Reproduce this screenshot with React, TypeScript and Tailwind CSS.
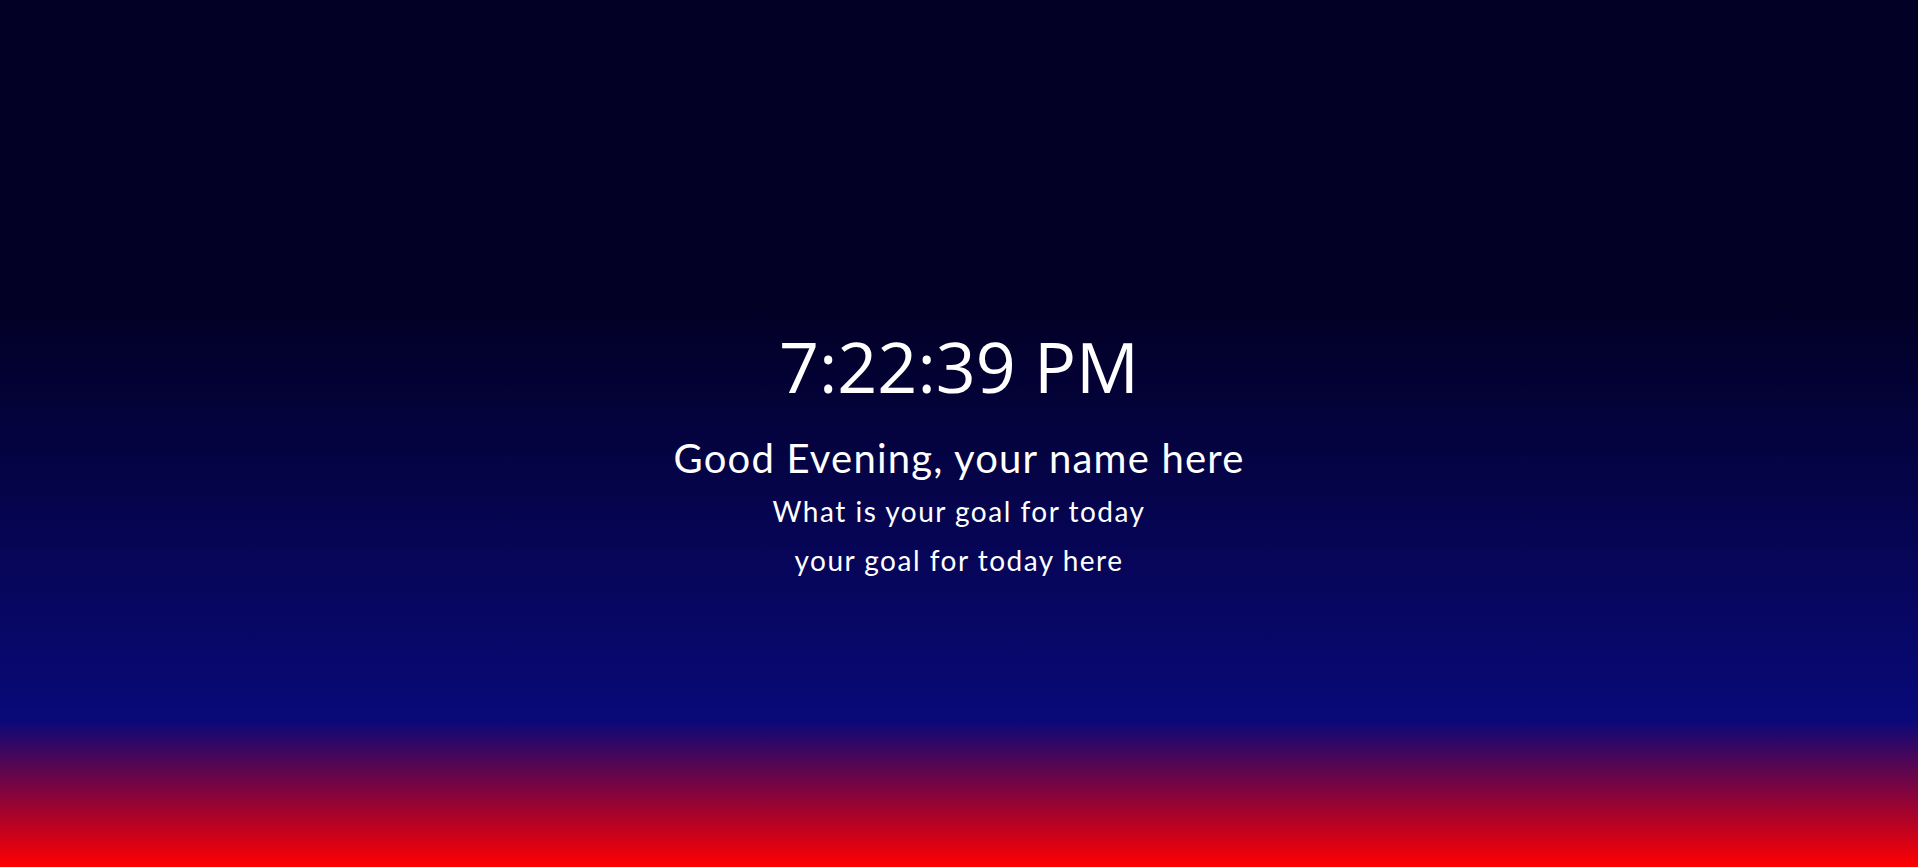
export default function App() {
  return (
    <div className="flex h-[867px] w-full flex-col items-center bg-[linear-gradient(180deg,#020024_35%,#090979_83%,#ff0000_100%)] pt-[318px] text-white">
      <h1 className="font-['Open_Sans',sans-serif] text-[70px] leading-[96px]">
        7:22:39 PM
      </h1>
      <div className="mt-[16px] flex flex-col items-center font-['Lato',sans-serif]">
        <p className="text-[40px] leading-[56px] tracking-[1.2px]">
          Good Evening, your name here
        </p>
        <p className="text-[28px] leading-[51px] tracking-[1.5px]">
          What is your goal for today
        </p>
        <p className="-mt-[2px] text-[28px] leading-[51px] tracking-[1.5px]">
          your goal for today here
        </p>
      </div>
    </div>
  );
}
